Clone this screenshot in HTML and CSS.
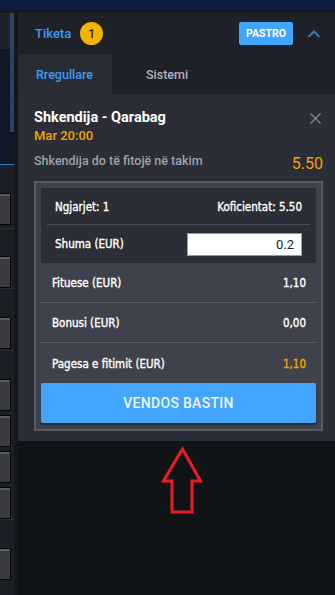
FILE: index.html
```html
<!DOCTYPE html>
<html>
<head>
<meta charset="utf-8">
<link rel="stylesheet" href="styles.css">
</head>
<body>
<div class="topbar"></div>
<div class="main">
  <div class="side">
    <div class="side-head"><div class="scroll"></div></div>
    <div class="side-hatch"><div class="scroll scroll-low"></div></div>
    <div class="side-line"></div>
    <div class="side-group g1"><div class="sbox"></div></div>
    <div class="side-group g2"><div class="sbox"></div></div>
    <div class="side-group g3"><div class="sbox"></div></div>
    <div class="side-group g4"><div class="sbox"></div><div class="sbox"></div><div class="sbox"></div><div class="sbox"></div></div>
    <div class="side-group g5"><div class="sbox"></div></div>
  </div>
  <div class="gutter"></div>
  <div class="right">
    <div class="panel">
      <div class="head">
        <span class="title">Tiketa</span>
        <span class="badge">1</span>
        <span class="spacer"></span>
        <button class="clear">PASTRO</button>
        <svg class="chev" width="14" height="10" viewBox="0 0 14 10"><path d="M1.5 8 L7 2.5 L12.5 8" fill="none" stroke="#3a78b8" stroke-width="2"/></svg>
      </div>
      <div class="tabs">
        <div class="tab active">Rregullare</div>
        <div class="tab">Sistemi</div>
      </div>
      <div class="content">
        <div class="event">
          <div class="event-main">
            <div class="match">Shkendija - Qarabag</div>
            <div class="time">Mar 20:00</div>
          </div>
          <svg class="close" width="11" height="11" viewBox="0 0 11 11"><path d="M0.5 0.5 L10.5 10.5 M10.5 0.5 L0.5 10.5" stroke="#868a93" stroke-width="1.1"/></svg>
        </div>
        <div class="pick">
          <span class="pick-text">Shkendija do të fitojë në takim</span>
          <span class="odds">5.50</span>
        </div>
        <div class="box">
          <div class="top">
            <div class="trow">
              <span>Ngjarjet: 1</span>
              <span>Koficientat: 5.50</span>
            </div>
            <div class="trow stake">
              <span>Shuma (EUR)</span>
              <div class="input">0.2</div>
            </div>
          </div>
          <div class="row"><span>Fituese (EUR)</span><span>1,10</span></div>
          <div class="row"><span>Bonusi (EUR)</span><span>0,00</span></div>
          <div class="row last"><span>Pagesa e fitimit (EUR)</span><span class="gold">1,10</span></div>
          <button class="place">VENDOS BASTIN</button>
        </div>
      </div>
    </div>
    <div class="below">
      <svg class="arrow" width="44" height="70" viewBox="0 0 44 70"><path d="M21.5 3 L39.5 35 L31 35 L31 66 L11 66 L11 35 L2.5 35 Z" fill="none" stroke="#ed1c24" stroke-width="3" stroke-linejoin="miter"/></svg>
    </div>
  </div>
</div>
</body>
</html>
```

FILE: styles.css
```css
* { box-sizing: border-box; }
html, body {
  margin: 0;
  padding: 0;
  width: 335px;
  height: 595px;
  overflow: hidden;
  background: #111417;
  font-family: Roboto, "Open Sans", sans-serif;
}
.topbar {
  height: 13px;
  background: #0c1c44;
  border-bottom: 3px solid #14171b;
}
.main {
  display: flex;
  height: 582px;
}
.side {
  width: 15px;
  background: #1c1f25;
  display: flex;
  flex-direction: column;
  border-right: 1px solid #16181c;
}
.side-head {
  height: 40px;
  background: #1f2229;
  display: flex;
  justify-content: flex-end;
}
.scroll {
  width: 4px;
  background: #2a4466;
  height: 100%;
}
.side-hatch {
  height: 127px;
  background: #0f1726;
  background-image: repeating-linear-gradient(45deg, #0d1522 0 1px, #111a2b 1px 3px);
  display: flex;
  justify-content: flex-end;
}
.scroll-low { height: 83px; }
.side-line {
  height: 1px;
  background: #2f80d8;
}
.side-group {
  border-bottom: 1px solid #2a2d34;
  display: flex;
  flex-direction: column;
  gap: 4px;
}
.g1 { padding-top: 28px; height: 67px; }
.g2 { padding-top: 27px; height: 64px; }
.g3 { padding-top: 28px; height: 65px; }
.g4 { padding-top: 28px; height: 172px; }
.g5 { padding-top: 28px; height: 80px; border-bottom: none; }
.sbox {
  width: 11px;
  height: 32px;
  background: #393b41;
  border: 1px solid #050607;
  border-left: none;
  box-shadow: inset 0 2px 0 #5a5c62;
}
.gutter {
  width: 3px;
  background: #14171b;
}
.right {
  flex: 1;
  display: flex;
  flex-direction: column;
}
.panel {
  background: #2b2e36;
  border-left: 1px solid #1c2b33;
  border-bottom: 1px solid #1c3440;
}
.head {
  height: 41px;
  background: #1f2128;
  display: flex;
  align-items: center;
  padding: 0 14px 0 16px;
}
.title {
  color: #3d9bf2;
  font-size: 13px;
  font-weight: 500;
}
.badge {
  margin-left: 9px;
  width: 23px;
  height: 23px;
  border-radius: 50%;
  background: #f4b400;
  color: #1b1d20;
  font-size: 12px;
  font-weight: 500;
  display: flex;
  align-items: center;
  justify-content: center;
}
.spacer { flex: 1; }
.clear {
  border: none;
  background: #42a5ff;
  color: #fff;
  font-family: Roboto, sans-serif;
  font-weight: 700;
  font-size: 10.5px;
  height: 23px;
  width: 54px;
  padding: 0;
  border-radius: 2px;
  margin-right: 14px;
}
.chev { display: block; }
.tabs {
  display: flex;
  height: 40px;
  background: #1f2128;
}
.tab {
  width: 93px;
  display: flex;
  align-items: center;
  padding-left: 17px;
  font-size: 12.5px;
  font-weight: 500;
  color: #aeb3bd;
}
.tab.active {
  background: #2a2c33;
  color: #3d9bf2;
}
.tab + .tab { padding-left: 34px; }
.content {
  padding: 15px 12px 9px 15px;
}
.event {
  display: flex;
  justify-content: space-between;
  align-items: flex-start;
}
.match {
  color: #fff;
  font-size: 14.5px;
  font-weight: 700;
  line-height: 18px;
}
.time {
  color: #f5a300;
  font-size: 13px;
  font-weight: 500;
  line-height: 17px;
}
.close { margin-top: 4px; margin-right: 2px; }
.pick {
  display: flex;
  justify-content: space-between;
  align-items: center;
  margin-top: 7px;
  height: 18px;
}
.pick-text {
  color: #9fa3ab;
  font-size: 12.5px;
  font-weight: 500;
}
.odds {
  color: #f5a300;
  font-size: 16px;
  margin-top: 6px;
}
.box {
  margin-top: 12px;
  background: #3f424c;
  border: 2px solid #575a63;
  padding: 5px 5px 6px;
  font-family: "DejaVu Sans Condensed", Roboto, sans-serif;
  font-size: 11.5px;
  font-weight: 400;
  -webkit-text-stroke: 0.35px currentColor;
  color: #fff;
}
.top {
  background: #2b2e36;
  padding: 0 6px;
}
.trow {
  height: 37px;
  display: flex;
  justify-content: space-between;
  align-items: center;
  padding: 2px 8px 0 8px;
}
.trow:first-child { border-bottom: 1px solid #4a4d56; }
.trow.stake { height: 38px; padding-top: 0; }
.input {
  width: 115px;
  height: 23px;
  background: #fff;
  border: 1px solid #9a9ca2;
  color: #1b1d20;
  font-family: Roboto, sans-serif;
  -webkit-text-stroke: 0;
  font-weight: 400;
  font-size: 13px;
  text-align: right;
  padding: 3px 7px 0 0;
}
.row {
  height: 40px;
  display: flex;
  justify-content: space-between;
  align-items: center;
  padding: 1px 10px 0 11px;
  border-bottom: 1px solid #5a5d66;
}
.row.last { border-bottom: none; }
.gold { color: #f5a300; }
.place {
  display: block;
  width: 100%;
  height: 40px;
  border: none;
  border-radius: 2px;
  background: #42a5ff;
  color: #eef6ff;
  font-family: Roboto, sans-serif;
  -webkit-text-stroke: 0;
  font-size: 14px;
  font-weight: 500;
  letter-spacing: 0.3px;
  box-shadow: 0 2px 2px rgba(0,0,0,0.35);
}
.below {
  flex: 1;
  background: #111417;
  padding: 5px 0 0 143px;
}
.arrow { display: block; }
```
